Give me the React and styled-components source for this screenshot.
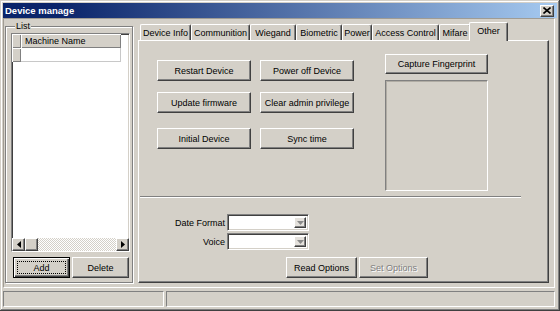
import React from "react";
import styled, { createGlobalStyle, css } from "styled-components";

const GlobalStyle = createGlobalStyle`
  html, body {
    margin: 0;
    padding: 0;
    background: #d4d0c8;
  }
  body {
    font-family: "Liberation Sans", Arial, sans-serif;
    font-size: 9px;
    color: #000;
  }
  * {
    box-sizing: border-box;
  }
`;

const raised = css`
  border: 1px solid;
  border-color: #fff #404040 #404040 #fff;
  box-shadow: inset -1px -1px 0 #808080;
`;

const sunken = css`
  border: 1px solid;
  border-color: #808080 #fff #fff #808080;
  box-shadow: inset 1px 1px 0 #404040, inset -1px -1px 0 #d4d0c8;
`;

const Window = styled.div`
  width: 560px;
  height: 311px;
  padding: 3px 3px 4px 3px;
  background: #d4d0c8;
  box-shadow: inset -1px -1px 0 #404040, inset 1px 1px 0 #d4d0c8,
    inset -2px -2px 0 #808080, inset 2px 2px 0 #fff;
  display: flex;
  flex-direction: column;
`;

const TitleBar = styled.div`
  height: 15px;
  display: flex;
  align-items: center;
  justify-content: space-between;
  padding: 0 3px 0 2px;
  background: linear-gradient(to right, #0a246a 10%, #a6caf0);
  color: #fff;
  font-weight: bold;
  font-size: 9.5px;
`;

const CloseButton = styled.div`
  width: 14px;
  height: 12px;
  background: #d4d0c8;
  ${raised};
  display: flex;
  align-items: center;
  justify-content: center;
`;

const Body = styled.div`
  height: 270px;
  margin-right: 2px;
  display: flex;
  gap: 5px;
  padding: 2px 0 0 1px;
  border: 1px solid;
  border-color: #a09c94 #fff #fff #a09c94;
`;

const GroupBox = styled.div`
  position: relative;
  width: 128px;
  height: 257px;
  margin-top: 5px;
  padding: 6px 0 0 5px;
  border: 1px solid #808080;
  box-shadow: inset 1px 1px 0 #fff, 1px 1px 0 #fff;
`;

const Legend = styled.span`
  position: absolute;
  top: -7px;
  left: 9px;
  padding: 0 1px;
  background: #d4d0c8;
  line-height: 12px;
`;

const ListView = styled.div`
  width: 119px;
  height: 219px;
  background: #fff;
  ${sunken};
  display: flex;
  flex-direction: column;
`;

const GridRow = styled.div`
  display: flex;
  height: 14px;
`;

const HeaderCell = styled.div`
  width: ${({ $w }) => $w}px;
  height: 100%;
  background: #d4d0c8;
  box-shadow: inset 1px 1px 0 #fff, inset -1px -1px 0 #808080;
  padding-left: 4px;
  line-height: 14px;
`;

const DataCell = styled.div`
  width: ${({ $w }) => $w}px;
  height: 100%;
  border-right: 1px solid #c8c8c8;
  border-bottom: 1px solid #c8c8c8;
`;

const ListFill = styled.div`
  flex: 1;
`;

const HScroll = styled.div`
  display: flex;
  height: 13px;
`;

const ScrollButton = styled.div`
  width: ${({ $w }) => $w || 13}px;
  height: 13px;
  background: #d4d0c8;
  ${raised};
  display: flex;
  align-items: center;
  justify-content: center;
`;

const ScrollTrack = styled.div`
  flex: 1;
  background: repeating-conic-gradient(#fff 0 25%, #d4d0c8 0 50%) 0 0 / 2px
    2px;
`;

const ListButtons = styled.div`
  display: flex;
  gap: 2px;
  margin-top: 5px;
  padding-left: 2px;
`;

const Button = styled.div`
  position: relative;
  width: ${({ $w }) => $w}px;
  height: ${({ $h }) => $h || 21}px;
  background: #d4d0c8;
  display: flex;
  align-items: center;
  justify-content: center;
  white-space: nowrap;
  ${({ $default }) =>
    $default
      ? css`
          border: 1px solid #000;
          box-shadow: inset 1px 1px 0 #fff, inset -1px -1px 0 #404040,
            inset -2px -2px 0 #808080;
          &::after {
            content: "";
            position: absolute;
            inset: 3px;
            border: 1px dotted #000;
          }
        `
      : raised};
  ${({ $disabled }) =>
    $disabled &&
    css`
      color: #808080;
      text-shadow: 1px 1px 0 #fff;
    `};
`;

const TabControl = styled.div`
  width: 411px;
  display: flex;
  flex-direction: column;
`;

const TabStrip = styled.div`
  height: 19px;
  display: flex;
  align-items: flex-end;
  padding-left: 2px;
`;

const Tab = styled.div`
  position: relative;
  width: ${({ $w }) => $w}px;
  height: 16px;
  border-top: 1px solid #fff;
  border-left: 1px solid #fff;
  border-right: 1px solid #404040;
  box-shadow: inset -1px 0 0 #808080;
  border-radius: 2px 2px 0 0;
  background: #d4d0c8;
  display: flex;
  align-items: center;
  justify-content: center;
  white-space: nowrap;
  ${({ $active }) =>
    $active &&
    css`
      height: 19px;
      margin: 0 -2px -1px -2px;
      z-index: 1;
      padding-bottom: 2px;
    `};
`;

const TabPage = styled.div`
  height: 243px;
  border: 1px solid;
  border-color: #fff #404040 #404040 #fff;
  box-shadow: inset -1px -1px 0 #808080;
  display: flex;
  flex-direction: column;
`;

const TopSection = styled.div`
  height: 155px;
  display: flex;
  padding-left: 18px;
`;

const ActionGrid = styled.div`
  margin-top: 19px;
  display: grid;
  grid-template-columns: 94px 94px;
  grid-template-rows: 32px 36px 21px;
  column-gap: 9px;
  align-items: start;
`;

const SideColumn = styled.div`
  margin-left: 31px;
  margin-top: 13px;
  display: flex;
  flex-direction: column;
  gap: 6px;
`;

const PictureBox = styled.div`
  width: 103px;
  height: 111px;
  border: 1px solid;
  border-color: #808080 #fff #fff #808080;
  box-shadow: inset 1px 1px 0 #b0aca4;
`;

const Separator = styled.div`
  width: 381px;
  height: 2px;
  margin-left: 1px;
  border-top: 1px solid #808080;
  border-bottom: 1px solid #fff;
`;

const FormGrid = styled.div`
  margin-top: 16px;
  display: grid;
  grid-template-columns: 86px 82px;
  column-gap: 2px;
  row-gap: 2px;
  align-items: center;
`;

const FieldLabel = styled.div`
  text-align: right;
`;

const Combo = styled.div`
  height: 17px;
  background: #fff;
  ${sunken};
  display: flex;
  justify-content: flex-end;
  padding: 2px;
`;

const ComboArrow = styled.div`
  width: 12px;
  height: 100%;
  background: #e4e1dc;
  ${raised};
  display: flex;
  align-items: center;
  justify-content: center;
`;

const OptionButtons = styled.div`
  display: flex;
  gap: 2px;
  margin-top: 7px;
  padding-left: 147px;
`;

const StatusBar = styled.div`
  height: 16px;
  margin-top: 3px;
  display: flex;
  gap: 2px;
  padding-right: 2px;
`;

const StatusPanel = styled.div`
  width: ${({ $w }) => ($w ? `${$w}px` : "auto")};
  flex: ${({ $w }) => ($w ? "none" : 1)};
  border: 1px solid;
  border-color: #808080 #fff #fff #808080;
`;

const Triangle = ({ dir, color = "#000" }) => {
  const pts = {
    left: "4,0 0,3.5 4,7",
    right: "0,0 4,3.5 0,7",
    down: "0,0 7,0 3.5,4",
  }[dir];
  const w = dir === "down" ? 7 : 4;
  const h = dir === "down" ? 4 : 7;
  return (
    <svg width={w} height={h} viewBox={`0 0 ${w} ${h}`}>
      <polygon points={pts} fill={color} />
    </svg>
  );
};

const tabs = [
  { label: "Device Info", w: 51 },
  { label: "Communition", w: 59 },
  { label: "Wiegand", w: 46 },
  { label: "Biometric", w: 46 },
  { label: "Power", w: 30 },
  { label: "Access Control", w: 67 },
  { label: "Mifare", w: 32 },
  { label: "Other", w: 39, active: true },
];

const actions = [
  "Restart Device",
  "Power off Device",
  "Update firmware",
  "Clear admin privilege",
  "Initial Device",
  "Sync time",
];

const ComboBox = () => (
  <Combo>
    <ComboArrow>
      <Triangle dir="down" color="#8a8a8a" />
    </ComboArrow>
  </Combo>
);

export default function App() {
  return (
    <>
      <GlobalStyle />
      <Window>
        <TitleBar>
          <span>Device manage</span>
          <CloseButton>
            <svg width="8" height="7" viewBox="0 0 8 7">
              <path d="M0.5 0.5 L7.5 6.5 M7.5 0.5 L0.5 6.5" stroke="#000" strokeWidth="1.6" />
            </svg>
          </CloseButton>
        </TitleBar>
        <Body>
          <GroupBox>
            <Legend>List</Legend>
            <ListView>
              <GridRow>
                <HeaderCell $w={9} />
                <HeaderCell $w={100}>Machine Name</HeaderCell>
              </GridRow>
              <GridRow>
                <HeaderCell $w={9} />
                <DataCell $w={100} />
              </GridRow>
              <ListFill />
              <HScroll>
                <ScrollButton>
                  <Triangle dir="left" />
                </ScrollButton>
                <ScrollButton />
                <ScrollTrack />
                <ScrollButton>
                  <Triangle dir="right" />
                </ScrollButton>
              </HScroll>
            </ListView>
            <ListButtons>
              <Button $w={57} $default>
                Add
              </Button>
              <Button $w={57}>Delete</Button>
            </ListButtons>
          </GroupBox>
          <TabControl>
            <TabStrip>
              {tabs.map((t) => (
                <Tab key={t.label} $w={t.w} $active={t.active}>
                  {t.label}
                </Tab>
              ))}
            </TabStrip>
            <TabPage>
              <TopSection>
                <ActionGrid>
                  {actions.map((a) => (
                    <Button key={a} $w={94}>
                      {a}
                    </Button>
                  ))}
                </ActionGrid>
                <SideColumn>
                  <Button $w={103} $h={20}>
                    Capture Fingerprint
                  </Button>
                  <PictureBox />
                </SideColumn>
              </TopSection>
              <Separator />
              <FormGrid>
                <FieldLabel>Date Format</FieldLabel>
                <ComboBox />
                <FieldLabel>Voice</FieldLabel>
                <ComboBox />
              </FormGrid>
              <OptionButtons>
                <Button $w={71}>Read Options</Button>
                <Button $w={69} $disabled>
                  Set Options
                </Button>
              </OptionButtons>
            </TabPage>
          </TabControl>
        </Body>
        <StatusBar>
          <StatusPanel $w={161} />
          <StatusPanel />
        </StatusBar>
      </Window>
    </>
  );
}
